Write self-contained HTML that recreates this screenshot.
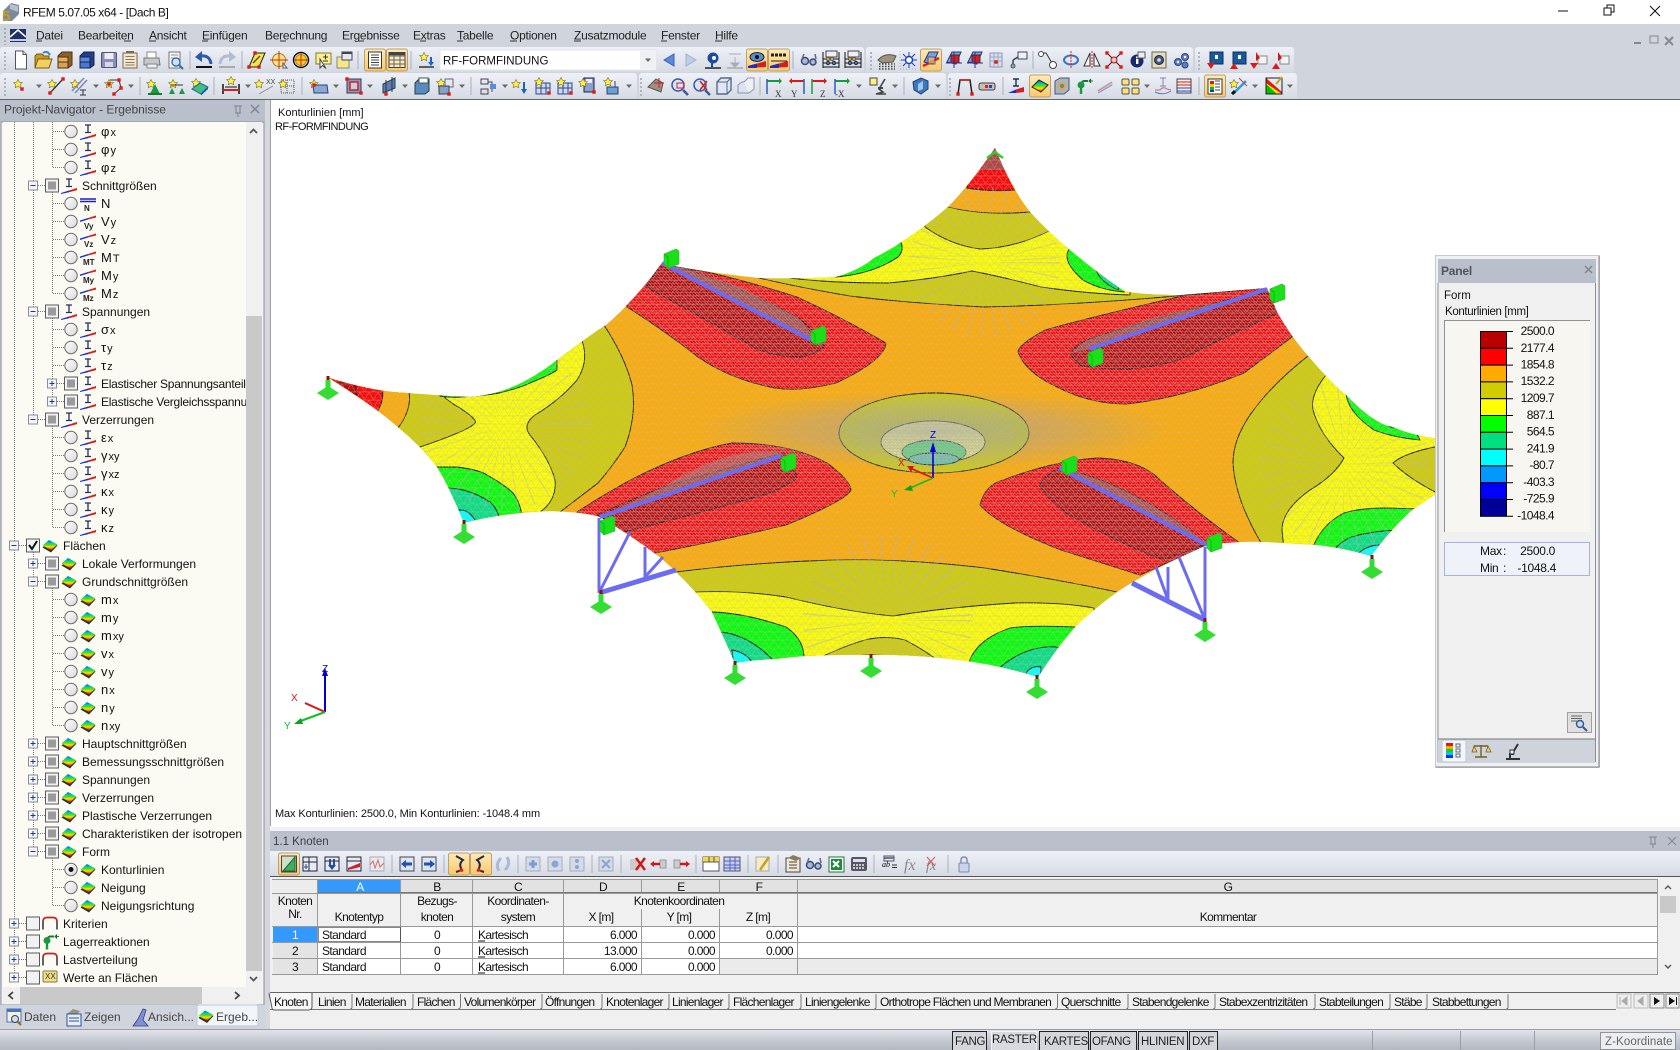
<!DOCTYPE html>
<html lang="de"><head><meta charset="utf-8"><title>RFEM 5.07.05 x64 - [Dach B]</title>
<style>
html,body{margin:0;padding:0;background:#fff;width:1680px;height:1050px;overflow:hidden}
svg{display:block;font-family:"Liberation Sans",sans-serif;fill:#000}
.m{font-size:12px;letter-spacing:-.25px;fill:#222}
.t{font-size:12px;fill:#111}
.tb{font-size:12px;letter-spacing:-.6px;fill:#111}
.tc{font-size:12px;letter-spacing:-.72px;fill:#111}
.c{text-anchor:middle}.r{text-anchor:end}
.s{font-size:11px}
.g{font-size:13px}
.gr{font-size:12px;fill:#444}
</style></head><body>
<svg width="1680" height="1050" viewBox="0 0 1680 1050" xmlns="http://www.w3.org/2000/svg">
<defs>
<linearGradient id="tbg" x1="0" y1="0" x2="0" y2="1"><stop offset="0" stop-color="#eef1f7"/><stop offset="1" stop-color="#d6dae3"/></linearGradient>
<linearGradient id="act" x1="0" y1="0" x2="0" y2="1"><stop offset="0" stop-color="#ffeab8"/><stop offset="1" stop-color="#fdc866"/></linearGradient>
<linearGradient id="stb" x1="0" y1="0" x2="0" y2="1"><stop offset="0" stop-color="#e2e4ea"/><stop offset=".5" stop-color="#c6cad2"/><stop offset="1" stop-color="#b4b8c0"/></linearGradient>
<linearGradient id="rad" x1="0" y1="0" x2="1" y2="1"><stop offset="0" stop-color="#fff"/><stop offset="1" stop-color="#d8d8d8"/></linearGradient>
<linearGradient id="rb" x1="0" y1="0" x2="0" y2="1"><stop offset="0" stop-color="#0060e0"/><stop offset=".3" stop-color="#00d0a0"/><stop offset=".5" stop-color="#60e000"/><stop offset=".7" stop-color="#ffe000"/><stop offset="1" stop-color="#f01000"/></linearGradient>
<radialGradient id="hz"><stop offset="0" stop-color="#9a9ab0" stop-opacity=".6"/><stop offset=".55" stop-color="#a0a0b0" stop-opacity=".35"/><stop offset="1" stop-color="#a0a0a0" stop-opacity="0"/></radialGradient>
<pattern id="m1" width="9" height="8" patternUnits="userSpaceOnUse"><path d="M0 0H9M0 8H9M0 0L4.5 8L9 0" stroke="#bcbcbc" stroke-width=".7" fill="none"/></pattern>
<pattern id="m2" width="3" height="3" patternUnits="userSpaceOnUse"><path d="M0 0L3 3M0 1.5H3" stroke="#b4b4b4" stroke-width=".6" fill="none"/></pattern>
<clipPath id="shell"><path id="sp" d="M995 148Q1012 190 1030 212Q1049 233 1070 250Q1100 275 1124 291Q1140 295 1180 295L1267 288L1277 312Q1292 338 1309 357Q1330 382 1346 395Q1375 425 1393 427Q1415 437 1450 440L1450 495L1434 495Q1420 505 1412 510Q1390 530 1371 556Q1335 545 1300 544Q1260 541 1240 542Q1220 543 1207 545Q1150 570 1117 592Q1090 612 1075 627Q1055 650 1038 677Q1000 665 959 660Q910 654 870 655Q810 654 775 659Q750 660 735 663Q725 640 712 612Q695 590 676 572Q655 550 600 517Q585 512 550 511Q500 513 464 523Q450 488 437 467Q420 445 399 428Q377 408 329 378Q375 392 407 393Q445 396 470 397Q500 395 527 380Q545 370 557 360Q590 335 606 325Q635 300 662 263L679 267Q720 274 759 278Q800 279 836 277Q860 270 874 258Q890 250 900 243Q925 227 948 207Q970 185 995 148Z"/></clipPath>
<clipPath id="tree"><rect x="3" y="122" width="243" height="865"/></clipPath>
<clipPath id="main"><rect x="271" y="100" width="1409" height="726"/></clipPath>

<!-- tree parts -->
<g id="rad0"><circle r="6.2" fill="url(#rad)" stroke="#6a6a6a"/></g>
<g id="ibeam"><path d="M-3-6.5H3M0-6.5V1M-3 1H3" stroke="#22305a" stroke-width="1.3" fill="none"/><path d="M-8 7.5L0 5V6.8L-8 8.5Z" fill="#1030e0"/><path d="M0 5L8 2.5V4.6L0 6.8Z" fill="#d02020"/></g>
<g id="isurf"><path d="M-7.5 1L-1-5L7.5-1L1 6Z" fill="#333" transform="translate(0 1)"/><path d="M-7.5 0L-1-5.5L7.5-1L1 4.5Z" fill="url(#rb)"/></g>
<g id="bx"><rect x="-6.5" y="-6.5" width="13" height="13" fill="#f2f2f2" stroke="#5a5a62"/></g>
<g id="bxm"><use href="#bx"/><rect x="-4" y="-4" width="8" height="8" fill="#9a9a9a"/></g>
<g id="ex"><rect x="-4.5" y="-4.5" width="9" height="9" fill="#f4f5fa" stroke="#8a8e9c"/><path d="M-2.5 0H2.5" stroke="#1a3a8a"/></g>
<g id="ep"><use href="#ex"/><path d="M0-2.5V2.5" stroke="#1a3a8a"/></g>
<g id="L3b"><use href="#rad0" x="71"/><use href="#ibeam" x="88"/></g>
<g id="L3s"><use href="#rad0" x="71"/><use href="#isurf" x="88"/></g>
<g id="L2mb"><use href="#ex" x="33"/><use href="#bxm" x="52"/><use href="#ibeam" x="69"/></g>
<g id="L2ms"><use href="#ex" x="33"/><use href="#bxm" x="52"/><use href="#isurf" x="69"/></g>
<g id="L2ps"><use href="#ep" x="33"/><use href="#bxm" x="52"/><use href="#isurf" x="69"/></g>
<g id="L25"><use href="#ep" x="52"/><use href="#bxm" x="71"/><use href="#ibeam" x="88"/></g>
<g id="wedge"><use href="#rad0" x="71"/><path d="M80-1L88-3.5V-2L80 0.5Z" fill="#1030e0"/><path d="M88-3.5L96-6V-4L88-2Z" fill="#d02020"/></g>
<g id="arch"><path d="M-7 6V-2Q-7-6-3-6H3Q7-6 7-2V6" fill="none" stroke="#333" stroke-width="1.5"/><path d="M-7-2Q-7-6-3-6H3Q7-6 7-2" fill="none" stroke="#d02020" stroke-width="1.5"/></g>

<!-- toolbar -->
<path id="dd" d="M-3-1.5H3L0 2Z" fill="#6a6a6a"/>
<path id="star" d="M-4-8.5L-2.6-5.8L.4-5.4L-1.8-3.3L-1.2-.3L-4-1.7L-6.8-.3L-6.2-3.3L-8.4-5.4L-5.4-5.8Z" fill="#fff040" stroke="#7a7040" stroke-width=".6"/>
<rect id="rd" x="-1.7" y="-1.7" width="3.4" height="3.4" fill="#e01818"/>
<g id="doc"><path d="M-5.5-9H2L5.5-5.5V9H-5.5Z" fill="#fff" stroke="#555"/><path d="M2-9V-5.5H5.5" fill="#ddd" stroke="#555"/></g>
<g id="fold"><path d="M-8 8V-4L-6-6H-1L1-4H6V8Z" fill="#c89a28" stroke="#7a5c10"/><path d="M-8 8L-5-1H9L6 8Z" fill="#f2d060" stroke="#7a5c10"/><path d="M0-7Q4-10 7-5" stroke="#3a8ac0" stroke-width="2" fill="none"/></g>
<g id="cab"><path d="M-7-4L-3-8H7V5L3 8H-7Z" fill="#8a6028" stroke="#4a3414"/><rect x="-7" y="-3" width="10" height="5" fill="#e8b060" stroke="#4a3414"/><rect x="-7" y="2" width="10" height="6" fill="#dca050" stroke="#4a3414"/></g>
<g id="cabb"><path d="M-7-4L-3-8H7V5L3 8H-7Z" fill="#24408a" stroke="#14244a"/><rect x="-7" y="-3" width="10" height="5" fill="#5a88e0" stroke="#14244a"/><rect x="-7" y="2" width="10" height="6" fill="#4a78d0" stroke="#14244a"/></g>
<g id="flop"><rect x="-7.5" y="-7.5" width="15" height="15" rx="1" fill="#8a8eb8" stroke="#50547a"/><rect x="-4.5" y="-7" width="9" height="6" fill="#eee"/><rect x="-4" y="2" width="8" height="5" fill="#d8d8e4"/></g>
<g id="note"><rect x="-7" y="-7" width="14" height="15" fill="#f2e6d0" stroke="#7a6a50"/><path d="M-4.500-3.500H4.500M-4.500-.5H4.500M-4.500 2.500H4.500M-4.500 5H4.500" stroke="#8a7a60"/><path d="M-4-8H4" stroke="#7a6a50" stroke-width="2"/></g>
<g id="prt"><path d="M-5-8H4V-1H-5Z" fill="#fff" stroke="#888"/><path d="M-8-2H7L8 5H-8Z" fill="#c8c8cc" stroke="#777"/><path d="M-5 4H5V8H-5Z" fill="#eee" stroke="#888"/></g>
<g id="prv"><path d="M-6-8H5V8H-6Z" fill="#f4f4f4" stroke="#777"/><path d="M-4-5H3M-4-2H1" stroke="#999"/><circle cx="1" cy="2" r="4" fill="#cfe4f8" stroke="#3a6ab0" stroke-width="1.4"/><path d="M4 5L8 9" stroke="#3a6ab0" stroke-width="2"/></g>
<g id="und"><path d="M7 4Q6-5-3-4" stroke="#2a5ab0" stroke-width="3" fill="none"/><path d="M-2-9L-9-3L-2 2Z" fill="#2a5ab0"/><path d="M-8 7H8" stroke="#111" stroke-width="2"/></g>
<g id="red"><path d="M-7 4Q-6-5 3-4" stroke="#b0bcd0" stroke-width="3" fill="none"/><path d="M2-9L9-3L2 2Z" fill="#b0bcd0"/><path d="M-8 7H8" stroke="#aaa" stroke-width="2"/></g>
<g id="para"><path d="M-8 7L-2-7H8L2 7Z" fill="#f4e050" stroke="#222"/><use href="#rd" x="-8" y="7"/><use href="#rd" x="-2" y="-7"/><use href="#rd" x="2" y="7"/><path d="M-4 3L3-4" stroke="#222"/></g>
<g id="tg1"><circle r="6.5" fill="#f8e880" stroke="#a08030"/><path d="M-9 0H9M0-9V9" stroke="#e02020"/><path d="M4 3L8 8L4 8Z" fill="#fff" stroke="#555"/></g>
<g id="tg2"><circle r="7.5" fill="none" stroke="#111" stroke-width="1.4"/><circle r="5.5" fill="#f0d020" stroke="#b09010"/><path d="M-7 0H7M0-7V7" stroke="#e02020"/></g>
<g id="npm"><rect x="-7" y="-7" width="15" height="11" fill="#fbf090" stroke="#8a7a30"/><path d="M0-3H5M2.500-5.500V-.5M0 1H5" stroke="#333"/><path d="M-3-1L-3 8L-.5 5.500L3 8.500Z" fill="#fff" stroke="#444"/></g>
<g id="win"><rect x="-8" y="-3" width="12" height="11" fill="#f6e888" stroke="#887" /><rect x="-3" y="-8" width="10" height="8" fill="#e8e8f0" stroke="#445"/><path d="M-3-7H7" stroke="#445" stroke-width="2"/></g>
<g id="lst"><rect x="-6.500" y="-8" width="13" height="16" fill="#fff" stroke="#333"/><path d="M-4-5H4M-4-2.500H4M-4 0H4M-4 2.500H4M-4 5H4" stroke="#444"/></g>
<g id="tbl"><rect x="-8" y="-7.500" width="16" height="15" fill="#fbeaba" stroke="#444"/><path d="M-8-4H8M-8 0H8M-8 4H8M-3-7.500V7.500M3-7.500V7.500" stroke="#666"/><path d="M-8-6H8" stroke="#444" stroke-width="2.500"/></g>
<g id="sdn"><use href="#star" x="2" y="1"/><path d="M5-3V3" stroke="#2060c0" stroke-width="2"/><path d="M2 2H8L5 6Z" fill="#2060c0"/><path d="M-7 7H8" stroke="#333" stroke-width="1.500"/></g>
<g id="la"><path d="M5-6V6L-5 0Z" fill="#5a8ae0" stroke="#3a60b0"/></g>
<g id="ra"><path d="M-5-6V6L5 0Z" fill="#c0cde8" stroke="#a0b0d0"/></g>
<g id="pey"><circle cy="-2" r="5.500" fill="#1e4aa0"/><circle cy="-2" cx="1" r="2" fill="#fff"/><path d="M-1 3V7" stroke="#1e4aa0" stroke-width="2"/><path d="M-8 8H8" stroke="#222" stroke-width="1.500"/></g>
<g id="xxd"><path d="M-6-6H6M0-3V6M-4 3H4L0 7Z" stroke="#aab" fill="#aab"/><path d="M-8 8H8" stroke="#aaa" stroke-width="1.500"/></g>
<g id="eye"><ellipse cy="-3" rx="7" ry="4.500" fill="#5a8ad0" stroke="#222"/><circle cy="-3" r="2" fill="#111"/><path d="M-9 6L9 1V7L-9 8Z" fill="#d02020"/><path d="M-9 6L0 3.500V8H-9Z" fill="#1a30c0"/></g>
<g id="xxa"><path d="M-8-5H8" stroke="#222" stroke-dasharray="3 1" stroke-width="3"/><path d="M-8 1H8" stroke="#222"/><path d="M-9 6L9 1V7L-9 8Z" fill="#d02020"/><path d="M-9 6L0 3.500V8H-9Z" fill="#1a30c0"/></g>
<g id="gls"><circle cx="-4" cy="1" r="3.500" fill="#a8b8d8" stroke="#3a4a70" stroke-width="1.500"/><circle cx="4" cy="2" r="3" fill="#a8b8d8" stroke="#3a4a70" stroke-width="1.500"/><path d="M-7-1L-5-6M7-1L6-6" stroke="#5a6a90" stroke-width="1.500"/></g>
<g id="aba"><path d="M-8-1H8M-8 3H8M-8 7H8M-8-8V8M8-8V8" stroke="#111"/><circle cx="-3" cy="-1" r="1.700" fill="#d8b040" stroke="#654"/><circle cx="1" cy="-1" r="1.700" fill="#d8b040" stroke="#654"/><circle cx="-3" cy="3" r="1.700" fill="#4a70c0" stroke="#234"/><circle cx="3" cy="3" r="1.700" fill="#4a70c0" stroke="#234"/><rect x="-5" y="-9" width="11" height="6" fill="#f0f0f0" stroke="#445"/></g>
<g id="hnd"><path d="M-9 0Q-2-8 9-4L6 2L-5 3Z" fill="#a09080" stroke="#554"/><path d="M-8 4H8M-8 6.500H8M-8 9H8" stroke="#444" stroke-dasharray="1.500 1.500" stroke-width="1.500"/></g>
<g id="sun"><circle r="3.500" fill="#fff" stroke="#1a40c0" stroke-width="1.500"/><path d="M-8 0H-4M4 0H8M0-8V-4M0 4V8M-6-6L-3-3M6 6L3 3M-6 6L-3 3M6-6L3-3" stroke="#1a40c0"/><path d="M-9-9V9M-9 9H9" stroke="#aaa" stroke-dasharray="1 2"/></g>
<g id="vw"><path d="M-7 2L-2-8H7L2 4Z" fill="#7ea0d8" stroke="#203a80"/><path d="M-8 6L8-2" stroke="#e02020" stroke-width="2.500"/><rect x="-3" y="-3" width="7" height="7" fill="#f8c060" stroke="#203a80" opacity=".7"/></g>
<g id="vr"><path d="M-7 2L-2-8H7L2 4Z" fill="#7ea0d8" stroke="#203a80"/><rect x="-3" y="-5" width="8" height="8" fill="#e01818" stroke="#333"/><path d="M-8 3H8M0-8V8" stroke="#20309a"/></g>
<g id="bld"><rect x="-6" y="-7" width="12" height="14" fill="#d8e0f0" stroke="#8a94b8"/><path d="M-6-3H6M-6 1H6M-2-7V7M2-7V7" stroke="#a0a8c8"/><use href="#rd" x="0" y="2"/></g>
<g id="pw"><rect x="-1" y="-8" width="9" height="7" fill="#eef" stroke="#445"/><path d="M-6 8V0M-6 0L-1-3" stroke="#445" stroke-width="1.500"/><circle cx="-6" cy="6" r="2" fill="#8ab" stroke="#456"/></g>
<g id="nod"><path d="M-8-7H-2L4 3" stroke="#333" fill="none"/><circle cx="-7" cy="-6" r="2.500" fill="#fff" stroke="#444"/><circle cx="5" cy="5" r="3.500" fill="#fff" stroke="#444"/></g>
<g id="rot"><ellipse rx="7" ry="4.500" fill="none" stroke="#3a70c0" stroke-width="2"/><path d="M0-9V9" stroke="#e02020" stroke-dasharray="2 1"/></g>
<g id="mir"><path d="M-2 6L-2-7L-8 6ZM2 6L2-7L8 6Z" fill="#f4f4f4" stroke="#333"/><path d="M0-9V9" stroke="#e02020" stroke-dasharray="2 1"/></g>
<g id="crs"><path d="M-7-7L7 7M7-7L-7 7" stroke="#222"/><use href="#rd" x="-7" y="-7"/><use href="#rd" x="7" y="-7"/><use href="#rd" x="-7" y="7"/><use href="#rd" x="7" y="7"/><circle r="3" fill="#e8c0c0" stroke="#c01010"/></g>
<g id="inf"><circle cy="1" r="6.500" fill="#1c2a6a"/><rect x="-1" y="-1" width="2.400" height="5" fill="#fff"/><rect x="-1" y="-3.500" width="2.400" height="1.800" fill="#fff"/><rect x="1" y="-8" width="7" height="6" fill="#eee" stroke="#556"/></g>
<g id="gea"><rect x="-7" y="-8" width="14" height="16" fill="#e8dcc0" stroke="#665"/><circle r="4.500" fill="#3a5a90" stroke="#223"/><circle r="1.800" fill="#e8dcc0"/></g>
<g id="gea2"><circle cx="-3" cy="2" r="3.500" fill="#5a80c8" stroke="#2a4080"/><circle cx="4" cy="-3" r="3.500" fill="#5a80c8" stroke="#2a4080"/><circle cx="4" cy="5" r="3" fill="#5a80c8" stroke="#2a4080"/><circle cx="-3" cy="2" r="1.200" fill="#fff"/><circle cx="4" cy="-3" r="1.200" fill="#fff"/></g>
<g id="bdn"><rect x="-6" y="-8" width="13" height="12" fill="#1a5a9a" stroke="#0a3060"/><rect x="-1" y="-5" width="3" height="4" fill="#fff"/><path d="M-9 3H-1L-5 9Z" fill="#e01818"/></g>
<g id="bup"><rect x="-6" y="-8" width="13" height="12" fill="#1a5a9a" stroke="#0a3060"/><rect x="-1" y="-5" width="3" height="4" fill="#fff"/><path d="M-9 9H-1L-5 3Z" fill="#e01818"/></g>
<g id="rdn"><rect x="-1" y="-4" width="9" height="8" fill="#f4f4f4" stroke="#888"/><path d="M-3-8L1-2L-3 1Z" fill="#d01818"/><path d="M-9 3H-1L-5 9Z" fill="#e01818"/></g>
<g id="rup"><rect x="-1" y="-4" width="9" height="8" fill="#f4f4f4" stroke="#888"/><path d="M-3-8L1-2L-3 1Z" fill="#d01818"/><path d="M-9 9H-1L-5 3Z" fill="#e01818"/></g>
<!-- t2 -->
<g id="a1"><use href="#star" x="2" y="2"/><use href="#rd" x="2" y="3"/></g>
<g id="a2"><use href="#star" x="0" y="2"/><path d="M-6 7L7-7" stroke="#333" stroke-width="1.300"/><use href="#rd" x="-6" y="7"/><use href="#rd" x="7" y="-7"/></g>
<g id="a3"><use href="#star" x="0" y="2"/><path d="M-7 5L5-8M-4 7L8-6" stroke="#7a8ac0" stroke-width="1.600"/><path d="M1 4H7M4 4V9M1 9H7" stroke="#334" /></g>
<g id="a4"><use href="#star" x="-1" y="2"/><path d="M-4-6H5L7 2L0 8" fill="none" stroke="#333"/><use href="#rd" x="5" y="-6"/><use href="#rd" x="7" y="2"/><use href="#rd" x="0" y="8"/><use href="#rd" x="-5" y="-2"/></g>
<g id="a5"><use href="#star" x="0" y="2"/><path d="M-5 8L0-2L5 8Z" fill="#1a9a40"/><path d="M-7 8H7" stroke="#1a7a30" stroke-width="2"/></g>
<g id="a6"><use href="#star" x="0" y="2"/><path d="M-8 8L-5 2L-2 8ZM2 8L5 2L8 8Z" fill="#1a9a40"/><path d="M-6-1H6" stroke="#333"/></g>
<g id="a7"><use href="#star" x="0" y="1"/><path d="M-8 3L0-3L8 1L1 8Z" fill="#3ac080" stroke="#2a60a0"/><path d="M1 8L8 1V3L1 9.500Z" fill="#2050a0"/></g>
<g id="a8"><path d="M-8-2V8M8-2V8" stroke="#111" stroke-width="1.500"/><path d="M-8 4H8" stroke="#d02020" stroke-width="2"/><path d="M-6 1H6" stroke="#111"/><use href="#star" x="4" y="-1"/></g>
<g id="a9"><use href="#star" x="-2" y="2"/><text x="1" y="-2" font-size="7" fill="#444">XX</text><path d="M-6 8L8 0" stroke="#889"/></g>
<g id="a10"><rect x="-6" y="-6" width="13" height="13" fill="none" stroke="#555" stroke-dasharray="1 1"/><path d="M-6 0H7M0-6V7" stroke="#555" stroke-dasharray="1 1"/><use href="#star" x="0" y="2"/></g>
<g id="a11"><use href="#star" x="-2" y="2"/><path d="M-7-1L7-1L8 7H-6Z" fill="#8aa8d0" stroke="#24408a"/><use href="#rd" x="-6" y="-1"/></g>
<g id="a12"><rect x="-7" y="-7" width="14" height="14" fill="#8a9ab8" stroke="#303a60"/><rect x="-4" y="-4" width="8" height="8" fill="#c8d0e0" stroke="#d02020" stroke-width="1.500"/><use href="#rd" x="-7" y="-7"/><use href="#rd" x="7" y="7"/></g>
<g id="a13"><path d="M-6 7V-2L6-8V2Z" fill="#5a80b8" stroke="#244"/><path d="M-3 8V-6M3 6V-9" stroke="#333" /><use href="#rd" x="-3" y="8"/></g>
<g id="a14"><path d="M-7-3L-3-7H7V5L3 8H-7Z" fill="#5a88c0" stroke="#244"/><rect x="-3" y="-8" width="9" height="5" fill="#fff" stroke="#455"/></g>
<g id="a15"><use href="#star" x="-1" y="1"/><rect x="-1" y="-7" width="8" height="8" fill="#e8e8f0" stroke="#667"/><path d="M-7 0H3V8H-7Z" fill="#8aa0c8" stroke="#345"/><use href="#rd" x="3" y="8"/></g>
<g id="a16"><rect x="-8" y="-7" width="7" height="5" fill="none" stroke="#445"/><rect x="-8" y="3" width="7" height="5" fill="none" stroke="#445"/><path d="M-1-4H3V6" stroke="#445" fill="none"/><rect x="1" y="-2" width="6" height="5" fill="#5a8ae0"/></g>
<g id="a17"><use href="#star" x="-1" y="2"/><path d="M3-4V4" stroke="#2060c0" stroke-width="2"/><path d="M0 3H6L3 8Z" fill="#2060c0"/></g>
<g id="a18"><rect x="-7" y="-3" width="14" height="11" fill="#d0d8ee" stroke="#2a4a90"/><path d="M-7 2H7M-2-3V8M3-3V8" stroke="#2a4a90"/><use href="#star" x="0" y="0"/><use href="#rd" x="6" y="7"/></g>
<g id="a19"><rect x="-5" y="-8" width="10" height="14" fill="#8aa0d0" stroke="#223"/><rect x="-3" y="-7" width="6" height="4" fill="#eee"/><use href="#star" x="-2" y="1"/><use href="#rd" x="5" y="6"/></g>
<g id="a20"><use href="#star" x="0" y="0"/><path d="M-5 1H6V8H-5Z" fill="#6aa0d8" stroke="#345"/><path d="M3-5V1" stroke="#345"/></g>
<g id="a21"><path d="M-8 1L0-7L7-3L5 6Z" fill="#a09080" stroke="#555"/><path d="M3-8V2M-2-3H8" stroke="#c02020"/></g>
<g id="a22"><circle cx="-2" cy="-1" r="6" fill="#d8e4f8" stroke="#3a5aa0" stroke-width="1.500"/><path d="M3 4L8 9" stroke="#3a5aa0" stroke-width="2.500"/><rect x="-3" y="-3" width="7" height="5" fill="none" stroke="#d02020"/></g>
<g id="a23"><circle cx="-2" cy="-1" r="6" fill="#d8e4f8" stroke="#3a5aa0" stroke-width="1.500"/><path d="M3 4L8 9" stroke="#3a5aa0" stroke-width="2.500"/><path d="M-2-5L5 4M5-5L-2 4" stroke="#d02020" stroke-width="1.500"/></g>
<g id="a24"><path d="M-7-4L-3-8H7V4L3 8H-7Z" fill="#e0e6f2" stroke="#556a90" stroke-width="1.400"/><path d="M-7-4H3V8M3-4L7-8" stroke="#556a90" fill="none"/></g>
<g id="a25"><path d="M-8-1L-4-4H3V7H-8Z" fill="#dce2ee" stroke="#8a94b0"/><path d="M-2-4L2-8H8V3L3 7" fill="#eef0f6" stroke="#8a94b0"/></g>
<g id="ax"><path d="M-7-5H7" stroke="#1a9a40" stroke-width="2"/><path d="M-7-7V8" stroke="#2a60c0" stroke-width="1.500"/><path d="M5-8L8-5L5-2Z" fill="#1a9a40"/></g>
<g id="ay"><path d="M-7-5H7" stroke="#e01818" stroke-width="2"/><path d="M7-7V8" stroke="#2a60c0" stroke-width="1.500"/><path d="M-5-8L-8-5L-5-2Z" fill="#e01818"/></g>
<g id="az"><path d="M-7-5H7" stroke="#e01818" stroke-width="2"/><path d="M-7-7V8" stroke="#1a9a40" stroke-width="1.500"/><path d="M5-8L8-5L5-2Z" fill="#e01818"/></g>
<g id="a26"><rect x="-8" y="-8" width="7" height="7" fill="#fff080" stroke="#444"/><path d="M7-7L1 3L5 6L-2 8H8" stroke="#444" stroke-width="1.600" fill="none"/><rect x="0" y="1" width="5" height="2" fill="#444"/></g>
<g id="a27"><path d="M-8-4L0-8L7-5L7 3L0 8L-7 4Z" fill="#3a78c0" stroke="#20406a"/><path d="M-3-2L2-5V3L-3 5Z" fill="#a0c8f0"/></g>
<g id="a28"><path d="M-7 8L-5-6H5L7 8" fill="none" stroke="#222" stroke-width="1.500"/><path d="M-5-6H5" stroke="#d02020" stroke-width="1.500"/><use href="#rd" x="-7" y="8"/><use href="#rd" x="7" y="8"/></g>
<g id="a29"><rect x="-8" y="-3" width="16" height="7" rx="2" fill="#c8c0b0" stroke="#444"/><rect x="-2" y="-1" width="3" height="3" fill="#e02020"/><rect x="2" y="-1" width="3" height="3" fill="#2040d0"/></g>
<g id="a30"><path d="M-3-7H3M0-7V0M-3 0H3" stroke="#22305a" stroke-width="1.400" fill="none"/><path d="M-8 7L0 3.500V7Z" fill="#1030e0"/><path d="M0 7V3.500L8 1V6Z" fill="#d02020"/></g>
<g id="a31"><path d="M-8 1L-1-6L8-1L1 6Z" fill="url(#rb)" stroke="#222"/></g>
<g id="a32"><path d="M-7-5L-2-8H7V4L2 8H-7Z" fill="#a0b8c8" stroke="#556"/><circle cx="0" cy="0" r="4.500" fill="#e8a060"/><circle r="2" fill="#40a070"/></g>
<g id="a33"><path d="M-3 3Q-3-5 0-5H4" stroke="#1a7a30" stroke-width="2" fill="none"/><circle cy="-1" cx="-3" r="3.500" fill="#1a9a40"/><path d="M5-5L9-5M7-7L5-5L7-3" stroke="#1a7a30"/><path d="M-3 3V8" stroke="#1a9a40" stroke-width="2.500"/></g>
<g id="a34"><path d="M-8 4L7-5L8-1L-6 7Z" fill="#c4c8d8"/><path d="M-7 5L7-4" stroke="#e08080"/><path d="M-7 7L7-1" stroke="#8090c0"/></g>
<g id="a35"><rect x="-8" y="-7" width="7" height="6" rx="1" fill="#fde080" stroke="#554"/><rect x="2" y="-7" width="7" height="6" rx="1" fill="#fde080" stroke="#554"/><rect x="-8" y="2" width="7" height="6" rx="1" fill="#fde080" stroke="#554"/><rect x="2" y="2" width="7" height="6" rx="1" fill="#fde080" stroke="#554"/></g>
<g id="a36"><path d="M-3-8H3M0-8V0M-3 0H3" stroke="#7a8ac0" fill="none"/><path d="M-8 4H-3Q0 0 4 3L8 4" stroke="#c07070" fill="none"/><path d="M-8 6Q0 10 8 5" stroke="#6070c0" fill="none"/></g>
<g id="a37"><rect x="-7" y="-7" width="14" height="14" fill="#f4f0e8" stroke="#444"/><path d="M-7-4H7M-7-1H7" stroke="#d02020"/><path d="M-7 2H7M-7 5H7" stroke="#2040d0"/></g>
<g id="a38"><rect x="-7" y="-7" width="14" height="15" fill="#fff" stroke="#333"/><rect x="-5" y="-5" width="4" height="3" fill="#e01818"/><rect x="-5" y="-2" width="4" height="3" fill="#f0d000"/><rect x="-5" y="1" width="4" height="3" fill="#10b030"/><rect x="-5" y="4" width="4" height="2" fill="#1030e0"/><path d="M0-5H5M0-2H5M0 1H5M0 4H5" stroke="#444"/></g>
<g id="a39"><use href="#star" x="-1" y="2"/><path d="M-6 8L7-5" stroke="#30a0d0" stroke-width="2.500"/><path d="M0-8L8 0" stroke="#c04040"/><path d="M-7 8L-4 5" stroke="#111" stroke-width="3"/></g>
<g id="a40"><path d="M-8-8V8H8Z" fill="#00c000"/><path d="M-8-8V-2L3 8H8Z" fill="#f0e000"/><path d="M-8-8L8 6V8L-8 -3Z" fill="#e01818"/><rect x="-8" y="-8" width="16" height="16" fill="none" stroke="#222"/><path d="M2-2L8-9" stroke="#c8a020" stroke-width="2"/></g>
<!-- table toolbar -->
<g id="b1"><rect x="-7.500" y="-8" width="15" height="16" fill="#cfe0c8" stroke="#445"/><path d="M-6 7L6-7V7Z" fill="#40b060" stroke="#206030"/></g>
<g id="b2"><rect x="-7" y="-7" width="14" height="14" fill="#e6eaf4" stroke="#223"/><path d="M-7-2H7M-1-7V7" stroke="#223"/><path d="M-4 0V5M-6 3H-2" stroke="#204aa0"/></g>
<g id="b3"><rect x="-7" y="-7" width="14" height="14" fill="#e6eaf4" stroke="#223"/><path d="M-7-3H7" stroke="#223"/><path d="M-2-5V2M2-5V2" stroke="#204aa0" stroke-width="2"/><path d="M-4 1H4L0 6Z" fill="#204aa0"/></g>
<g id="b4"><rect x="-7" y="-7" width="14" height="14" fill="#e6eaf4" stroke="#223"/><path d="M-7-3H7" stroke="#223"/><path d="M-6 4L6-1V3L-6 6Z" fill="#d02020"/></g>
<g id="b5"><rect x="-7" y="-7" width="14" height="14" fill="#e8e8ee" stroke="#aab"/><path d="M-7 1L-4-3L-2 4L1-4L3 3L7-1" stroke="#d07070" fill="none"/></g>
<g id="b6"><rect x="-7" y="-7" width="14" height="14" fill="#dde4f2" stroke="#445"/><path d="M5 0H-4" stroke="#2050b0" stroke-width="3"/><path d="M-1-4L-6 0L-1 4Z" fill="#2050b0"/></g>
<g id="b7"><rect x="-7" y="-7" width="14" height="14" fill="#dde4f2" stroke="#445"/><path d="M-5 0H4" stroke="#2050b0" stroke-width="3"/><path d="M1-4L6 0L1 4Z" fill="#2050b0"/></g>
<g id="b8"><path d="M-3-8L4-4Q-1 0 3 6L-3 8" fill="none" stroke="#1e2a50" stroke-width="2"/><path d="M3 3L4 8L-1 7Z" fill="#e02020"/></g>
<g id="b9"><path d="M3-8L-4-4Q1 0-3 6L3 8" fill="none" stroke="#1e2a50" stroke-width="2"/><path d="M-3 3L-4 8L1 7Z" fill="#e02020"/></g>
<g id="b10"><path d="M-4 7Q-8 0-2-6M4-7Q8 0 2 6" stroke="#aabbd8" stroke-width="3" fill="none"/></g>
<g id="b11"><rect x="-7" y="-7" width="14" height="14" fill="#d4dae6" stroke="#aab"/><path d="M-4 0H4M0-4V4" stroke="#7a9ad8" stroke-width="3"/></g>
<g id="b12"><rect x="-7" y="-7" width="14" height="14" fill="#d4dae6" stroke="#aab"/><circle r="3.500" fill="#8aa4d8"/></g>
<g id="b13"><rect x="-7" y="-7" width="14" height="14" fill="#d4dae6" stroke="#aab"/><circle cy="-3" r="2" fill="#8aa4d8"/><circle cy="3" r="2" fill="#8aa4d8"/></g>
<g id="b14"><rect x="-7" y="-7" width="14" height="14" fill="#d4dae6" stroke="#aab"/><path d="M-4-4L4 4M4-4L-4 4" stroke="#8aa4d8" stroke-width="2"/></g>
<g id="b15"><rect x="-8" y="-5" width="9" height="11" fill="#ccc"/><path d="M-2-6L7 6M7-6L-2 6" stroke="#d01818" stroke-width="2.500"/></g>
<g id="b16"><rect x="2" y="-4" width="6" height="8" fill="#ccc" stroke="#999"/><path d="M2 0H-6" stroke="#d01818" stroke-width="2.500"/><path d="M-4-3L-8 0L-4 3Z" fill="#d01818"/></g>
<g id="b17"><rect x="-8" y="-4" width="6" height="8" fill="#ccc" stroke="#999"/><path d="M-2 0H6" stroke="#d01818" stroke-width="2.500"/><path d="M4-3L8 0L4 3Z" fill="#d01818"/></g>
<g id="b18"><rect x="-8" y="-7" width="16" height="14" fill="#fff" stroke="#556"/><rect x="-8" y="-7" width="16" height="5" fill="#f6d840"/><path d="M-8-2H8M-2-7V-2M3-7V-2" stroke="#556"/></g>
<g id="b19"><rect x="-8" y="-7" width="16" height="14" fill="#c8d0f0" stroke="#556"/><path d="M-8-3H8M-8 1H8M-8 4H8" stroke="#5060c0"/><path d="M-2-7V7M3-7V7" stroke="#5060c0"/></g>
<g id="b20"><rect x="-7" y="-7" width="13" height="14" fill="#f4ecc8" stroke="#aaa"/><path d="M-3 6L6-7" stroke="#c8a020" stroke-width="2.500"/></g>
<g id="b21"><rect x="-7" y="-6" width="14" height="14" fill="#f2e8d0" stroke="#445"/><path d="M-4-2H4M-4 1H4M-4 4H4" stroke="#445"/><path d="M-5-6L0-9L8-6L3-3Z" fill="#8a7a60"/></g>
<g id="b22"><rect x="-7" y="-7" width="15" height="15" fill="#fff" stroke="#1a7a30"/><rect x="-5" y="-5" width="11" height="11" fill="#1e8a3c"/><path d="M-3-3L3 3M3-3L-3 3" stroke="#fff" stroke-width="2"/></g>
<g id="b23"><rect x="-8" y="-7" width="16" height="14" rx="2" fill="#556" /><rect x="-6" y="-5" width="12" height="3" fill="#dde"/><path d="M-6 1H6M-6 4H6" stroke="#eee" stroke-dasharray="2 1" stroke-width="1.500"/></g>
<g id="b24"><rect x="-5" y="-8" width="10" height="5" fill="#dfe4f0" stroke="#556"/><path d="M-5-6H5" stroke="#556" stroke-width="1.500"/><text x="-7" y="3" font-size="8" font-style="italic" font-family="Liberation Serif,serif">ab</text><path d="M3 1H8M3 3.500H8" stroke="#333"/></g>
<g id="b25"><text x="-7" y="6" font-size="16" font-style="italic" font-family="Liberation Serif,serif" fill="#888">fx</text></g>
<g id="b26"><text x="-7" y="6" font-size="14" font-style="italic" font-family="Liberation Serif,serif" fill="#888">fx</text><path d="M-6-7L2 2M2-7L-6 2" stroke="#e05050"/></g>
<g id="b27"><rect x="-5" y="-1" width="10" height="9" rx="1" fill="#c8d4ec" stroke="#7a8ab0"/><path d="M-3-1V-4Q-3-7 0-7Q3-7 3-4V-1" stroke="#7a8ab0" fill="none" stroke-width="1.400"/></g>
<path id="sep" d="M0-9V9" stroke="#aab0bc"/>
<g id="on"><rect x="-10.500" y="-11" width="21" height="22" rx="2" fill="url(#act)" stroke="#b8a070"/></g>
<!-- supports -->
<g id="sup"><path d="M-11 0L0-7L11 0L0 7Z" fill="#33dd33"/><path d="M-2.500-5V-13H2.500V-5Z" fill="#33dd33"/><rect x="-1.500" y="-17" width="3" height="4" fill="#8a1010"/></g>
<g id="post"><path d="M-7-4L5-9L8-7V6L-3 10L-7 6Z" fill="#19e019" stroke="#3ab03a" stroke-width=".6"/><path d="M-7-4L-3-1V10" fill="none" stroke="#0fb80f"/></g>
</defs>

<!-- window base -->
<rect width="1680" height="1050" fill="#d0d4dc"/>
<rect width="1680" height="24" fill="#fff"/>
<!-- app icon -->
<g><path d="M3 11L11 3L19 5V14L12 21H3Z" fill="#7a8a9a"/><path d="M10 4L18 6V12L10 9Z" fill="#b4c0cc"/><text x="2" y="21" font-size="15" font-weight="bold" fill="#c8a020">5</text></g>
<text x="23" y="16.500" font-size="12" letter-spacing="-.42" fill="#111">RFEM 5.07.05 x64 - [Dach B]</text>
<path d="M1558 11H1568" stroke="#111"/>
<path d="M1604 8V15H1611V8ZM1607 8V5H1614V12H1611" fill="none" stroke="#111"/>
<path d="M1650 6L1660 16M1660 6L1650 16" stroke="#111"/>

<!-- menu -->
<path d="M5 28V45" stroke="#a8adb8" stroke-dasharray="2 2" stroke-width="2"/>
<rect x="10" y="29" width="16" height="13" fill="#1e2f6a"/><path d="M10 37L18 30L26 37M10 40H26" stroke="#fff" fill="none" stroke-width="1.500"/>
<g class="m">
<text x="36" y="39.500">Datei</text><text x="78" y="39.500">Bearbeiten</text><text x="149" y="39.500">Ansicht</text><text x="202" y="39.500">Einfügen</text><text x="265" y="39.500">Berechnung</text><text x="342" y="39.500">Ergebnisse</text><text x="413" y="39.500">Extras</text><text x="457" y="39.500">Tabelle</text><text x="510" y="39.500">Optionen</text><text x="574" y="39.500">Zusatzmodule</text><text x="661" y="39.500">Fenster</text><text x="715" y="39.500">Hilfe</text>
</g>
<path d="M36 41H42M124 41H131M149 41H156M202 41H208M280 41H286M358 41H364M420 41H426M457 41H463M510 41H517M574 41H581M661 41H667M715 41H722" stroke="#333"/>
<path d="M1634 43H1641" stroke="#888" stroke-width="2"/><rect x="1650" y="36" width="8" height="7" fill="none" stroke="#888"/><path d="M1665 37L1673 45M1673 37L1665 45" stroke="#888" stroke-width="2"/>

<!-- toolbar bars -->
<rect x="0" y="47" width="864" height="25" rx="3" fill="url(#tbg)"/><rect x="866" y="47" width="327" height="25" rx="3" fill="url(#tbg)"/><rect x="1195" y="47" width="99" height="25" rx="3" fill="url(#tbg)"/>
<rect x="0" y="73" width="637" height="26" rx="3" fill="url(#tbg)"/><rect x="639" y="73" width="307" height="26" rx="3" fill="url(#tbg)"/><rect x="948" y="73" width="349" height="26" rx="3" fill="url(#tbg)"/>
<rect y="99" width="1680" height="1" fill="#666"/>
<path d="M5 52V70M5 78V96M871 52V70M1199 52V70M641 78V96M950 78V96" stroke="#b0b4c0" stroke-dasharray="2 2" stroke-width="2"/>

<use href="#doc" x="21" y="60"/><use href="#fold" x="43" y="60"/><use href="#cab" x="65" y="60"/><use href="#cabb" x="87" y="60"/><use href="#flop" x="109" y="60"/><use href="#note" x="130" y="60"/><use href="#prt" x="152" y="60"/><use href="#prv" x="175" y="60"/>
<use href="#sep" x="190" y="60"/><use href="#und" x="204" y="60"/><use href="#red" x="227" y="60"/><use href="#sep" x="242" y="60"/><use href="#para" x="257" y="60"/><use href="#tg1" x="279" y="60"/><use href="#tg2" x="301" y="60"/><use href="#npm" x="323" y="60"/><use href="#win" x="345" y="60"/><use href="#sep" x="358" y="60"/>
<use href="#on" x="375" y="60"/><use href="#lst" x="375" y="60"/><use href="#on" x="397" y="60"/><use href="#tbl" x="397" y="60"/><use href="#sep" x="411" y="60"/><use href="#sdn" x="426" y="60"/>
<rect x="440" y="50" width="216" height="20" fill="#fff" stroke="#e4e6ec"/><rect x="640" y="51" width="15" height="18" fill="#eef0f4"/><use href="#dd" x="648" y="60"/><text x="443" y="64.500" font-size="11.500" fill="#111">RF-FORMFINDUNG</text>
<use href="#la" x="669" y="60"/><use href="#ra" x="691" y="60"/><use href="#pey" x="713" y="60"/><use href="#xxd" x="735" y="60"/><use href="#on" x="757" y="60"/><use href="#eye" x="757" y="60"/><use href="#on" x="779" y="60"/><use href="#xxa" x="779" y="60"/><use href="#sep" x="793" y="60"/><use href="#gls" x="809" y="60"/><use href="#aba" x="831" y="60"/><use href="#aba" x="853" y="60"/>
<use href="#hnd" x="887" y="60"/><use href="#sun" x="909" y="60"/><use href="#on" x="931" y="60"/><use href="#vw" x="931" y="60"/><use href="#vr" x="954" y="60"/><use href="#vr" x="975" y="60"/><use href="#bld" x="996" y="60"/><use href="#pw" x="1019" y="60"/><use href="#sep" x="1033" y="60"/><use href="#nod" x="1048" y="60"/><use href="#rot" x="1071" y="60"/><use href="#mir" x="1092" y="60"/><use href="#crs" x="1114" y="60"/><use href="#inf" x="1137" y="60"/><use href="#gea" x="1159" y="60"/><use href="#gea2" x="1181" y="60"/>
<use href="#bdn" x="1216" y="60"/><use href="#bup" x="1239" y="60"/><use href="#rdn" x="1259" y="60"/><use href="#rup" x="1281" y="60"/>

<use href="#a1" x="20" y="86"/><use href="#dd" x="39" y="86"/><use href="#a2" x="56" y="86"/><use href="#a3" x="79" y="86"/><use href="#dd" x="96" y="86"/><use href="#a4" x="114" y="86"/><use href="#dd" x="131" y="86"/><use href="#sep" x="140" y="86"/><use href="#a5" x="155" y="86"/><use href="#a6" x="177" y="86"/><use href="#a7" x="200" y="86"/><use href="#sep" x="214" y="86"/><use href="#a8" x="231" y="86"/><use href="#dd" x="248" y="86"/><use href="#a9" x="265" y="86"/><use href="#a10" x="287" y="86"/><use href="#sep" x="302" y="86"/><use href="#a11" x="320" y="86"/><use href="#dd" x="336" y="86"/><use href="#a12" x="354" y="86"/><use href="#dd" x="370" y="86"/><use href="#a13" x="389" y="86"/><use href="#dd" x="405" y="86"/><use href="#a14" x="422" y="86"/><use href="#a15" x="446" y="86"/><use href="#dd" x="462" y="86"/><use href="#sep" x="471" y="86"/><use href="#a16" x="489" y="86"/><use href="#dd" x="505" y="86"/><use href="#a17" x="521" y="86"/><use href="#a18" x="543" y="86"/><use href="#a19" x="589" y="86"/><use href="#a18" x="565" y="86"/><use href="#a20" x="612" y="86"/><use href="#dd" x="629" y="86"/>
<use href="#a21" x="656" y="86"/><use href="#a22" x="680" y="86"/><use href="#a23" x="702" y="86"/><use href="#a24" x="724" y="86"/><use href="#a25" x="746" y="86"/><use href="#sep" x="760" y="86"/><use href="#ax" x="774" y="86"/><text x="775" y="97" font-size="9" font-family="Liberation Serif,serif" fill="#333">X</text><use href="#ay" x="797" y="86"/><text x="791" y="97" font-size="9" font-family="Liberation Serif,serif" fill="#333">Y</text><use href="#az" x="819" y="86"/><text x="820" y="97" font-size="9" font-family="Liberation Serif,serif" fill="#333">Z</text><use href="#ax" x="842" y="86"/><text x="835" y="97" font-size="9" font-family="Liberation Serif,serif" fill="#333">-X</text><use href="#dd" x="859" y="86"/><use href="#a26" x="878" y="86"/><use href="#dd" x="895" y="86"/><use href="#sep" x="904" y="86"/><use href="#a27" x="921" y="86"/><use href="#dd" x="938" y="86"/>
<use href="#a28" x="965" y="86"/><use href="#a29" x="987" y="86"/><use href="#sep" x="1003" y="86"/><use href="#a30" x="1016" y="86"/><use href="#on" x="1040" y="86"/><use href="#a31" x="1040" y="86"/><use href="#a32" x="1062" y="86"/><use href="#a33" x="1084" y="86"/><use href="#a34" x="1105" y="86"/><use href="#a35" x="1130" y="86"/><use href="#dd" x="1147" y="86"/><use href="#a36" x="1163" y="86"/><use href="#a37" x="1184" y="86"/><use href="#sep" x="1199" y="86"/><use href="#on" x="1215" y="86"/><use href="#a38" x="1215" y="86"/><use href="#a39" x="1239" y="86"/><use href="#dd" x="1255" y="86"/><use href="#a40" x="1274" y="86"/><use href="#dd" x="1290" y="86"/>

<!-- navigator panel -->
<rect x="0" y="100" width="270" height="930" fill="#d4d7de"/>
<rect x="0" y="100" width="265" height="22" fill="#b9c0cb"/>
<text x="4" y="113.500" font-size="12" fill="#444" letter-spacing="-.05">Projekt-Navigator - Ergebnisse</text>
<path d="M236 106V113M240 106V113M235 113H241M238 113V117M234 106H242" stroke="#808690" fill="none"/>
<path d="M251 105L259 113M259 105L251 113" stroke="#808690" stroke-width="1.500"/>
<rect x="1" y="122" width="263" height="883" fill="#f4f4f4" stroke="#8a8e98"/>
<rect x="3" y="122" width="243" height="865" fill="#fbfbf3"/>
<rect x="246" y="122" width="16" height="865" fill="#f0f0f0"/><rect x="246" y="316" width="16" height="655" fill="#c9c9c9"/>
<path d="M250 133L253.500 129.500L257 133" stroke="#555" stroke-width="1.800" fill="none"/>
<path d="M250 977L253.500 980.500L257 977" stroke="#555" stroke-width="1.800" fill="none"/>
<rect x="3" y="987" width="259" height="17" fill="#f0f0f0"/><rect x="20" y="987" width="182" height="17" fill="#c9c9c9"/>
<path d="M13 992L9 995.500L13 999M235 992L239 995.500L235 999" stroke="#444" stroke-width="1.800" fill="none"/>
<rect x="0" y="1005" width="265" height="24" fill="#d0d4dc"/>
<rect x="197" y="1005" width="61" height="21" rx="2" fill="#f2f5fa" stroke="#c0c8d4"/>
<g><rect x="7" y="1009" width="14" height="13" fill="#f4f0e0" stroke="#4a70c0"/><rect x="7" y="1009" width="14" height="3" fill="#4a70c0"/><circle cx="15" cy="1019" r="3.500" fill="#cde" stroke="#345"/><path d="M18 1022L21 1025" stroke="#a06020" stroke-width="2"/>
<path d="M67 1014L73 1009L80 1011L75 1017Z" fill="#a09080"/><rect x="67" y="1014" width="14" height="12" fill="#e8eef8" stroke="#2a50a0"/><path d="M69 1018H79M69 1021H79" stroke="#2a50a0"/>
<path d="M133 1026H148L143 1020L146 1010L143 1009L138 1019Z" fill="#8090d0" stroke="#303a90" stroke-width=".8"/><use href="#isurf" x="206" y="1016"/></g>
<g font-size="12" fill="#444"><text x="24" y="1021">Daten</text><text x="84" y="1021">Zeigen</text><text x="148" y="1021">Ansich...</text><text x="216" y="1021">Ergeb...</text></g>

<!-- tree -->
<g clip-path="url(#tree)">
<path d="M14.500 122V977M33.500 122V419M33.500 546V851M52.500 122V167M52.500 186V293M52.500 312V401M52.500 420V527M52.500 582V725M52.500 852V905" stroke="#777" stroke-dasharray="1 1" fill="none"/>
<path d="M53 131.500H65M53 149.500H65M53 167.500H65M38 185.500H46M53 203.500H65M53 221.500H65M53 239.500H65M53 257.500H65M53 275.500H65M53 293.500H65M38 311.500H46M53 329.500H65M53 347.500H65M53 365.500H65M57 383.500H65M57 401.500H65M38 419.500H46M53 437.500H65M53 455.500H65M53 473.500H65M53 491.500H65M53 509.500H65M53 527.500H65M19 545.500H27M38 563.500H46M38 581.500H46M53 599.500H65M53 617.500H65M53 635.500H65M53 653.500H65M53 671.500H65M53 689.500H65M53 707.500H65M53 725.500H65M38 743.500H46M38 761.500H46M38 779.500H46M38 797.500H46M38 815.500H46M38 833.500H46M38 851.500H46M53 869.500H65M53 887.500H65M53 905.500H65M19 923.500H27M19 941.500H27M19 959.500H27M19 977.500H27" stroke="#777" stroke-dasharray="1 1"/>

<use href="#L3b" y="131.500"/><use href="#L3b" y="149.500"/><use href="#L3b" y="167.500"/>
<use href="#L2mb" y="185.500"/>
<use href="#wedge" y="221.500"/><use href="#wedge" y="239.500"/><use href="#wedge" y="257.500"/><use href="#wedge" y="275.500"/><use href="#wedge" y="293.500"/>
<use href="#rad0" x="71" y="203.500"/><path d="M80 199H96M80 201.500H96" stroke="#2020c0" stroke-width="1.400"/>
<g font-size="8" font-weight="bold" fill="#222"><text x="84" y="211">N</text><text x="84" y="229">Vy</text><text x="84" y="247">Vz</text><text x="83" y="265">MT</text><text x="83" y="283">My</text><text x="83" y="301">Mz</text></g>
<use href="#L2mb" y="311.500"/><use href="#L3b" y="329.500"/><use href="#L3b" y="347.500"/><use href="#L3b" y="365.500"/><use href="#L25" y="383.500"/><use href="#L25" y="401.500"/><use href="#L2mb" y="419.500"/>
<use href="#L3b" y="437.500"/><use href="#L3b" y="455.500"/><use href="#L3b" y="473.500"/><use href="#L3b" y="491.500"/><use href="#L3b" y="509.500"/><use href="#L3b" y="527.500"/>
<use href="#ex" x="14" y="545.500"/><use href="#bx" x="33" y="545.500"/><path d="M29 545L32 549L37 541" stroke="#111" stroke-width="2" fill="none"/><use href="#isurf" x="50" y="545.500"/>
<use href="#L2ps" y="563.500"/><use href="#L2ms" y="581.500"/>
<use href="#L3s" y="599.500"/><use href="#L3s" y="617.500"/><use href="#L3s" y="635.500"/><use href="#L3s" y="653.500"/><use href="#L3s" y="671.500"/><use href="#L3s" y="689.500"/><use href="#L3s" y="707.500"/><use href="#L3s" y="725.500"/>
<use href="#L2ps" y="743.500"/><use href="#L2ps" y="761.500"/><use href="#L2ps" y="779.500"/><use href="#L2ps" y="797.500"/><use href="#L2ps" y="815.500"/><use href="#L2ps" y="833.500"/><use href="#L2ms" y="851.500"/>
<use href="#L3s" y="869.500"/><circle cx="71" cy="869.500" r="2.500" fill="#111"/><use href="#L3s" y="887.500"/><use href="#L3s" y="905.500"/>
<use href="#ep" x="14" y="923.500"/><use href="#bx" x="33" y="923.500"/><use href="#arch" x="50" y="923.500"/>
<use href="#ep" x="14" y="941.500"/><use href="#bx" x="33" y="941.500"/><use href="#a33" x="50" y="941.500"/>
<use href="#ep" x="14" y="959.500"/><use href="#bx" x="33" y="959.500"/><use href="#arch" x="50" y="959.500"/>
<use href="#ep" x="14" y="977.500"/><use href="#bx" x="33" y="977.500"/><rect x="43" y="971" width="14" height="11" rx="1" fill="#f0e080" stroke="#776"/><text x="45" y="979" font-size="8" fill="#333">XX</text>

<g class="t">
<text x="101" y="136" class="g">φ<tspan class="s" dx="1">x</tspan></text><text x="101" y="154" class="g">φ<tspan class="s" dx="1">y</tspan></text><text x="101" y="172" class="g">φ<tspan class="s" dx="1">z</tspan></text>
<text x="82" y="190">Schnittgrößen</text>
<text x="101" y="208" class="g">N</text><text x="101" y="226" class="g">V<tspan class="s" dx="1">y</tspan></text><text x="101" y="244" class="g">V<tspan class="s" dx="1">z</tspan></text><text x="101" y="262" class="g">M<tspan class="s" dx="1">T</tspan></text><text x="101" y="280" class="g">M<tspan class="s" dx="1">y</tspan></text><text x="101" y="298" class="g">M<tspan class="s" dx="1">z</tspan></text>
<text x="82" y="316">Spannungen</text>
<text x="101" y="334" class="g">σ<tspan class="s" dx="1">x</tspan></text><text x="101" y="352" class="g">τ<tspan class="s" dx="1">y</tspan></text><text x="101" y="370" class="g">τ<tspan class="s" dx="1">z</tspan></text>
<text x="101" y="388" letter-spacing="-.25">Elastischer Spannungsanteil</text><text x="101" y="406" letter-spacing="-.25">Elastische Vergleichsspannung</text>
<text x="82" y="424">Verzerrungen</text>
<text x="101" y="442" class="g">ε<tspan class="s" dx="1">x</tspan></text><text x="101" y="460" class="g">γ<tspan class="s" dx="1">xy</tspan></text><text x="101" y="478" class="g">γ<tspan class="s" dx="1">xz</tspan></text><text x="101" y="496" class="g">κ<tspan class="s" dx="1">x</tspan></text><text x="101" y="514" class="g">κ<tspan class="s" dx="1">y</tspan></text><text x="101" y="532" class="g">κ<tspan class="s" dx="1">z</tspan></text>
<text x="63" y="550">Flächen</text>
<text x="82" y="568">Lokale Verformungen</text><text x="82" y="586">Grundschnittgrößen</text>
<text x="101" y="604" class="g">m<tspan class="s" dx="1">x</tspan></text><text x="101" y="622" class="g">m<tspan class="s" dx="1">y</tspan></text><text x="101" y="640" class="g">m<tspan class="s" dx="1">xy</tspan></text><text x="101" y="658" class="g">v<tspan class="s" dx="1">x</tspan></text><text x="101" y="676" class="g">v<tspan class="s" dx="1">y</tspan></text><text x="101" y="694" class="g">n<tspan class="s" dx="1">x</tspan></text><text x="101" y="712" class="g">n<tspan class="s" dx="1">y</tspan></text><text x="101" y="730" class="g">n<tspan class="s" dx="1">xy</tspan></text>
<text x="82" y="748">Hauptschnittgrößen</text><text x="82" y="766">Bemessungsschnittgrößen</text><text x="82" y="784">Spannungen</text><text x="82" y="802">Verzerrungen</text><text x="82" y="820">Plastische Verzerrungen</text><text x="82" y="838">Charakteristiken der isotropen Flächen</text><text x="82" y="856">Form</text>
<text x="101" y="874">Konturlinien</text><text x="101" y="892">Neigung</text><text x="101" y="910">Neigungsrichtung</text>
<text x="63" y="928">Kriterien</text><text x="63" y="946">Lagerreaktionen</text><text x="63" y="964">Lastverteilung</text><text x="63" y="982">Werte an Flächen</text>
</g>
</g>

<!-- main view -->
<rect x="270" y="100" width="1410" height="727" fill="#fff"/>
<path d="M270.500 100V826" stroke="#9a9ea8"/>
<g clip-path="url(#main)">
<g clip-path="url(#shell)" stroke="#111" stroke-width=".9">
<rect x="300" y="130" width="1160" height="560" fill="#ffaa00" stroke="none"/>
<!-- left wing -->
<path d="M604 325Q625 357 632 385Q637 415 625 447Q612 467 598 483L560 512L540 540L300 540L300 300L560 300Z" fill="#d0cc00"/>
<path d="M581 338Q590 360 577 380Q560 400 535 415Q522 425 530 435Q550 460 555 480Q557 500 540 512L540 540L300 540L300 300L560 300Z" fill="#ffff00"/>
<path d="M432 385Q445 400 460 408Q478 420 475 423Q470 430 420 447L400 450L330 400L400 370Z" fill="#d0cc00"/>
<path d="M407 385Q415 405 398 428L380 430L320 380L400 370Z" fill="#ffaa00"/>
<path d="M382 385Q385 400 377 412L360 415L320 380L370 370Z" fill="#ff0000"/>
<path d="M355 380L357 395L320 385Z" fill="#c00000"/>
<path d="M440 390L440 396Q450 398 461 397Q490 395 499 393Q520 388 530 383Q550 375 557 370L557 350L500 380Z" fill="#00ff00"/>
<path d="M430 467L457 467Q480 470 487 475Q505 485 513 493Q522 505 522 520L450 530Z" fill="#00ff00"/>
<path d="M440 488L449 488Q470 489 490 502Q497 508 500 520L450 530Z" fill="#00e080"/>
<path d="M455 510L461 510Q470 510 478 525L460 530Z" fill="#00ffff"/>
<!-- right wing -->
<path d="M1308 356Q1271 385 1250 415Q1233 440 1233 463Q1235 500 1263 546L1500 560L1500 300Z" fill="#d0cc00"/>
<path d="M1326 375Q1310 395 1313 410Q1320 435 1344 458Q1335 475 1310 490Q1282 510 1282 530L1284 550L1500 560L1500 300Z" fill="#ffff00"/>
<path d="M1445 445Q1405 452 1393 463Q1410 480 1445 497Z" fill="#d0cc00"/>
<path d="M1346 390Q1345 410 1374 430Q1395 438 1420 440L1400 400Z" fill="#00ff00"/>
<path d="M1369 410Q1375 420 1393 428L1400 420Z" fill="#00e080"/>
<path d="M1420 509L1386 508Q1360 508 1344 513Q1320 525 1311 552L1390 570Z" fill="#00ff00"/>
<path d="M1405 530Q1375 530 1351 537Q1340 542 1332 552L1375 565Z" fill="#00e080"/>
<path d="M1380 545Q1365 545 1355 557L1375 565Z" fill="#00ffff"/>
<!-- top wing -->
<path d="M759 278Q797 287 850 296Q907 303 984 307Q1080 305 1187 295L1187 100L759 100Z" fill="#d0cc00"/>
<path d="M790 278Q828 283 888 283Q934 279 972 271Q1003 277 1041 287Q1090 294 1130 295L1130 100L790 100Z" fill="#ffff00"/>
<path d="M925 227Q950 245 980 249Q1015 248 1049 231L1049 100L925 100Z" fill="#d0cc00"/>
<path d="M948 207Q984 216 1030 212L1030 100L948 100Z" fill="#ffaa00"/>
<path d="M967 188Q990 192 1015 190L1015 100L967 100Z" fill="#ff0000"/>
<path d="M980 168L1008 168L1000 130L990 130Z" fill="#c00000"/>
<path d="M836 277Q873 274 898 257Q905 250 900 240L860 250Z" fill="#00ff00"/>
<path d="M1070 248Q1060 260 1083 280Q1100 290 1124 292L1125 270Z" fill="#00ff00"/>
<path d="M1095 268Q1100 282 1118 290L1120 280Z" fill="#00e080"/>
<!-- lower wing -->
<path d="M676 572Q745 563 832 560Q898 558 985 568Q1060 580 1117 592L1117 720L676 720Z" fill="#d0cc00"/>
<path d="M695 592Q740 590 786 597Q847 612 893 616Q949 607 1015 603Q1060 602 1094 608L1094 720L695 720Z" fill="#ffff00"/>
<path d="M712 612Q745 613 786 627Q805 640 804 660L735 680L700 630Z" fill="#00ff00"/>
<path d="M722 632Q750 636 773 660L735 680L715 640Z" fill="#00e080"/>
<path d="M732 650Q745 652 752 662L735 675Z" fill="#00ffff"/>
<path d="M1075 627Q1030 625 1010 628Q975 640 968 665L1040 690L1090 630Z" fill="#00ff00"/>
<path d="M1056 647Q1025 645 997 670L1040 690L1070 650Z" fill="#00e080"/>
<path d="M1041 667Q1030 665 1025 675L1040 685Z" fill="#00ffff"/>
<path d="M819 658Q847 645 865 640Q885 635 905 640Q925 650 944 665Z" fill="#d0cc00"/>
<path d="M837 660Q870 650 908 660Z" fill="#ffaa00"/>
<!-- red lobes -->
<path d="M662 263L679 267Q721 273 797 297Q843 318 886 343Q885 360 836 383Q800 392 775 388Q732 380 698 357Q664 330 627 307L620 250Z" fill="#ff0000"/>
<path d="M646 287L662 262L683 268Q740 287 797 317Q826 340 824 347Q810 357 797 357Q775 356 759 350Q729 333 683 307Z" fill="#c00000"/>
<path d="M1187 295Q1099 315 1045 330Q1018 345 1018 352Q1025 372 1057 387Q1090 404 1126 404Q1183 398 1244 373L1292 337L1300 280L1267 288Z" fill="#ff0000"/>
<path d="M1278 293L1278 313Q1233 333 1179 360Q1150 368 1126 369Q1090 369 1080 365Q1070 355 1071 353Q1075 345 1087 340Q1152 318 1256 293Z" fill="#c00000"/>
<path d="M577 512Q600 497 625 483Q683 452 732 443Q790 443 827 463Q850 480 851 490Q847 500 786 525Q724 540 655 553L600 530Z" fill="#ff0000"/>
<path d="M602 517L620 533Q704 512 770 493Q798 480 796 478Q797 465 783 453Q730 467 663 487Q625 502 597 515Z" fill="#c00000"/>
<path d="M980 505Q985 485 1003 480Q1057 460 1099 458Q1141 460 1160 480Q1200 515 1240 543L1207 545L1140 575Q1061 550 1061 550Q997 525 980 505Z" fill="#ff0000"/>
<path d="M1059 468Q1040 478 1040 487Q1050 500 1066 513Q1112 540 1163 560L1204 545L1190 530Q1120 480 1059 468Z" fill="#c00000"/>
<!-- hub -->
<ellipse cx="934" cy="433" rx="95" ry="40" fill="#d0cc00"/>
<ellipse cx="933" cy="442" rx="52" ry="21" fill="#ffff60"/>
<ellipse cx="934" cy="452" rx="32" ry="12" fill="#30ee50"/>
<ellipse cx="934" cy="459" rx="25" ry="6" fill="#50c8a0"/>
<!-- mesh -->
<g stroke="none">
<rect x="300" y="130" width="1160" height="560" fill="url(#m2)" opacity=".2"/>
<rect x="300" y="130" width="1160" height="560" fill="url(#m1)" opacity=".45"/>
<ellipse cx="934" cy="430" rx="240" ry="40" fill="url(#hz)"/>
<ellipse cx="933" cy="442" rx="52" ry="21" fill="url(#m2)" opacity=".6"/>
<path d="M662 263L679 267Q721 273 797 297Q843 318 886 343Q885 360 836 383Q800 392 775 388Q732 380 698 357Q664 330 627 307Z M1187 295Q1099 315 1045 330Q1018 345 1018 352Q1025 372 1057 387Q1090 404 1126 404Q1183 398 1244 373L1292 337L1277 312L1267 288Z M577 512Q600 497 625 483Q683 452 732 443Q790 443 827 463Q850 480 851 490Q847 500 786 525Q724 540 655 553Z M980 505Q985 485 1003 480Q1057 460 1099 458Q1141 460 1160 480Q1200 515 1240 543L1207 545L1140 575Q1061 550 1061 550Q997 525 980 505Z" fill="url(#m2)" opacity=".5"/>
<path d="M662 263L811 340L824 347L797 317L740 287L683 268Z" fill="#a09090" opacity=".5"/>
<path d="M1267 289L1089 349L1071 353L1087 340L1152 318L1256 293Z" fill="#a09090" opacity=".5"/>
<path d="M600 517L781 456L783 453Q730 444 663 487Z" fill="#a09090" opacity=".5"/>
<path d="M1059 468L1207 545L1190 530Q1120 480 1059 468Z" fill="#a09090" opacity=".5"/>
<path d="M980 133L1010 133L1008 170L982 170Z" fill="#a0a0a0" opacity=".4"/>
</g>
<g fill="none" stroke="#b4b4b4">
<ellipse cx="934" cy="436" rx="68" ry="26" stroke-width="24" stroke-dasharray="1 3" opacity=".35"/>
<circle cx="888" cy="620" r="50" stroke-width="70" stroke-dasharray="1 9" opacity=".45"/>
<circle cx="985" cy="262" r="45" stroke-width="60" stroke-dasharray="1 8" opacity=".4"/>
<circle cx="505" cy="425" r="50" stroke-width="70" stroke-dasharray="1 9" opacity=".35"/>
<circle cx="1345" cy="465" r="50" stroke-width="70" stroke-dasharray="1 9" opacity=".35"/>
</g>
</g>

<!-- truss & beams -->
<g stroke="#6c6cf0" fill="none">
<path d="M599 518V593M599 593L630 532M645 547V577M645 577L663 557" stroke-width="3"/>
<path d="M599 593L676 570" stroke-width="5"/>
<path d="M1205 547V620M1205 620L1179 557M1168 567V600M1168 600L1156 567" stroke-width="3"/>
<path d="M1205 620L1132 583" stroke-width="5"/>
<path d="M662 263L811 340M1267 289L1089 349M600 517L781 456M1059 468L1207 545" stroke-width="4"/>
</g>
<use href="#post" x="671" y="258"/><use href="#post" x="818" y="335"/><use href="#post" x="1277" y="293"/><use href="#post" x="1095" y="357"/><use href="#post" x="607" y="525"/><use href="#post" x="788" y="462"/><use href="#post" x="1069" y="465"/><use href="#post" x="1214" y="542"/>
<use href="#sup" x="328" y="393"/><use href="#sup" x="464" y="537"/><use href="#sup" x="735" y="678"/><use href="#sup" x="871" y="671"/><use href="#sup" x="1037" y="692"/><use href="#sup" x="601" y="607"/><use href="#sup" x="1205" y="635"/><use href="#sup" x="1372" y="572"/>
<path d="M987 158L995 152L1003 158" stroke="#33cc33" stroke-width="2.500" fill="none"/>

<!-- hub axes -->
<path d="M933 478V448" stroke="#0000d0" stroke-width="1.600"/><path d="M933 442L930 452H936Z" fill="#0000d0"/>
<path d="M933 478L910 468" stroke="#e01010" stroke-width="1.600"/><path d="M907 466L914 466L911 472Z" fill="#e01010"/>
<path d="M933 478L908 489" stroke="#10c020" stroke-width="1.600"/><path d="M904 490L911 485L913 491Z" fill="#10a020"/>
<text x="930" y="438" font-size="10" fill="#0000d0">Z</text><text x="898" y="466" font-size="10" fill="#e01010">X</text><text x="891" y="497" font-size="10" fill="#10c020">Y</text>
<!-- corner axes -->
<path d="M325 712V672" stroke="#0000d0" stroke-width="2"/><path d="M325 668L322 676H328Z" fill="#0000d0"/>
<path d="M325 712L305 703" stroke="#e01010" stroke-width="2"/>
<path d="M325 712L298 722" stroke="#10c020" stroke-width="2"/><path d="M294 724L301 718L303 724Z" fill="#10a020"/>
<text x="322" y="672" font-size="10" fill="#0000d0">Z</text><text x="291" y="701" font-size="10" fill="#e01010">X</text><text x="284" y="729" font-size="10" fill="#10c020">Y</text>

<text x="278" y="116" font-size="11" fill="#111">Konturlinien [mm]</text>
<text x="275" y="130" font-size="11" letter-spacing="-.55" fill="#111">RF-FORMFINDUNG</text>
<text x="275" y="817" font-size="11" letter-spacing="-.12" fill="#111">Max Konturlinien: 2500.0, Min Konturlinien: -1048.4 mm</text>
</g>

<!-- Panel -->
<rect x="1435.500" y="255.500" width="164" height="512" fill="#f0f0f2" stroke="#c8cad0"/>
<path d="M1599 256V767M1436 767H1599" stroke="#808488"/>
<rect x="1438" y="259" width="158" height="24" fill="#b9c0cb"/>
<text x="1441" y="275" font-size="12" font-weight="bold" fill="#50555e" letter-spacing="-.2">Panel</text>
<path d="M1585 266L1592 273M1592 266L1585 273" stroke="#808690" stroke-width="1.500"/>
<rect x="1438" y="283" width="157" height="456" fill="#f0f0f0"/>
<path d="M1438 283V762M1595.500 283V762" stroke="#8a8e94"/>
<text x="1444" y="299" font-size="11.500" fill="#111">Form</text>
<text x="1445" y="315" font-size="11.500" letter-spacing="-.35" fill="#111">Konturlinien [mm]</text>
<rect x="1444" y="320" width="146" height="212" fill="#f8f6f0"/><path d="M1444.500 532V320.500H1590" stroke="#909090" fill="none"/>
<g stroke="#000" stroke-width="1">
<rect x="1480.500" y="331.500" width="26" height="16.800" fill="#bb0000"/><rect x="1480.500" y="348.300" width="26" height="16.800" fill="#ff0000"/><rect x="1480.500" y="365.100" width="26" height="16.800" fill="#ffaa00"/><rect x="1480.500" y="381.900" width="26" height="16.800" fill="#d0cc00"/><rect x="1480.500" y="398.700" width="26" height="16.800" fill="#ffff00"/><rect x="1480.500" y="415.500" width="26" height="16.800" fill="#00ff00"/><rect x="1480.500" y="432.300" width="26" height="16.800" fill="#00e080"/><rect x="1480.500" y="449.100" width="26" height="16.800" fill="#00ffff"/><rect x="1480.500" y="465.900" width="26" height="16.800" fill="#0099ff"/><rect x="1480.500" y="482.700" width="26" height="16.800" fill="#0000ff"/><rect x="1480.500" y="499.500" width="26" height="16.800" fill="#000099"/>
<path d="M1507 331.500H1513M1507 348.300H1513M1507 365.100H1513M1507 381.900H1513M1507 398.700H1513M1507 415.500H1513M1507 432.300H1513M1507 449.100H1513M1507 465.900H1513M1507 482.700H1513M1507 499.500H1513M1507 516.300H1513"/>
</g>
<g font-size="12" letter-spacing="-.55" text-anchor="end" fill="#111">
<text x="1554" y="335">2500.0</text><text x="1554" y="352">2177.4</text><text x="1554" y="368.500">1854.8</text><text x="1554" y="385">1532.2</text><text x="1554" y="402">1209.7</text><text x="1554" y="419">887.1</text><text x="1554" y="435.500">564.5</text><text x="1554" y="452.500">241.9</text><text x="1554" y="469">-80.7</text><text x="1554" y="486">-403.3</text><text x="1554" y="502.500">-725.9</text><text x="1554" y="519.500">-1048.4</text>
</g>
<rect x="1444.500" y="542.500" width="145" height="33" fill="#eff2f9" stroke="#a8b0e0"/>
<g font-size="12" letter-spacing="-.3" fill="#111"><text x="1480" y="555">Max</text><text x="1503" y="555">:</text><text x="1555" y="555" text-anchor="end">2500.0</text><text x="1480" y="572">Min</text><text x="1503" y="572">:</text><text x="1556" y="572" text-anchor="end">-1048.4</text></g>
<rect x="1567.500" y="712.500" width="24" height="20" fill="#e0e0e0" stroke="#a0a0a0"/><path d="M1571 716H1582M1571 718.500H1582M1571 721H1577" stroke="#666"/><circle cx="1580" cy="724" r="3.500" fill="#c8dcf0" stroke="#335a90" stroke-width="1.400"/><path d="M1583 727L1587 731" stroke="#335a90" stroke-width="2"/>
<rect x="1438" y="739" width="157" height="24" fill="#cfd3db"/><path d="M1438 739H1595" stroke="#777"/>
<rect x="1442" y="740" width="24" height="22" rx="2" fill="#f2f5fa" stroke="#c0c8d4"/>
<g><rect x="1446" y="743" width="7" height="3" fill="#e01818"/><rect x="1446" y="746" width="7" height="3" fill="#ffaa00"/><rect x="1446" y="749" width="7" height="3" fill="#10d030"/><rect x="1446" y="752" width="7" height="3" fill="#00c8e0"/><rect x="1446" y="755" width="7" height="3" fill="#1030e0"/><path d="M1456 744h4v3h-4zM1456 749h4v3h-4zM1456 754h4v3h-4z" fill="none" stroke="#667"/></g>
<path d="M1481 745V757M1475 757H1487M1474 746H1488" stroke="#7a6020" stroke-width="1.400"/><path d="M1474 746L1472 752H1477ZM1488 746L1486 752H1491Z" fill="#e8d080" stroke="#7a6020" stroke-width=".8"/>
<path d="M1506 759H1520M1518 744L1512 754M1510 758V754H1514" stroke="#333" stroke-width="2" fill="none"/><rect x="1510" y="750" width="4" height="4" fill="#eee" stroke="#333"/>

<!-- table panel -->
<rect x="270" y="827" width="1410" height="203" fill="#f0f0f0"/>
<rect x="270" y="831" width="1410" height="20" fill="#b9c0cb"/>
<text x="273" y="845" font-size="11.500" fill="#3a3e48">1.1 Knoten</text>
<path d="M1651 837V844M1655 837V844M1650 844H1656M1653 844V848M1649 837H1657M1668 837L1676 845M1676 837L1668 845" stroke="#808690" fill="none"/>
<rect x="270" y="851" width="1410" height="25" fill="url(#tbg)"/>
<rect x="270" y="876" width="1410" height="1" fill="#555"/>
<g>
<use href="#on" x="289" y="864"/><use href="#b1" x="289" y="864"/><use href="#b2" x="310" y="864"/><use href="#b3" x="332" y="864"/><use href="#b4" x="354" y="864"/><use href="#b5" x="377" y="864"/><use href="#sep" x="392" y="864"/><use href="#b6" x="407" y="864"/><use href="#b7" x="429" y="864"/><use href="#sep" x="444" y="864"/><use href="#on" x="459" y="864"/><use href="#b8" x="459" y="864"/><use href="#on" x="481" y="864"/><use href="#b9" x="481" y="864"/><use href="#b10" x="503" y="864"/><use href="#sep" x="518" y="864"/><use href="#b11" x="533" y="864"/><use href="#b12" x="555" y="864"/><use href="#b13" x="577" y="864"/><use href="#sep" x="592" y="864"/><use href="#b14" x="606" y="864"/><use href="#sep" x="621" y="864"/><use href="#b15" x="638" y="864"/><use href="#b16" x="658" y="864"/><use href="#b17" x="682" y="864"/><use href="#sep" x="696" y="864"/><use href="#b18" x="711" y="864"/><use href="#b19" x="732" y="864"/><use href="#sep" x="748" y="864"/><use href="#b20" x="763" y="864"/><use href="#sep" x="778" y="864"/><use href="#b21" x="793" y="864"/><use href="#gls" x="814" y="864"/><use href="#b22" x="836" y="864"/><use href="#b23" x="859" y="864"/><use href="#sep" x="874" y="864"/><use href="#b24" x="889" y="864"/><use href="#b25" x="911" y="864"/><use href="#b26" x="933" y="864"/><use href="#sep" x="948" y="864"/><use href="#b27" x="964" y="864"/>
</g>

<!-- table -->
<rect x="272" y="879" width="1388" height="96" fill="#f0f0f0"/>
<rect x="272" y="880" width="46" height="47" fill="#ececec"/>
<g fill="#e2e2e2"><rect x="318" y="880" width="83" height="13" fill="#3399ff"/><rect x="401" y="880" width="72" height="13"/><rect x="473" y="880" width="91" height="13"/><rect x="564" y="880" width="78" height="13"/><rect x="642" y="880" width="78" height="13"/><rect x="720" y="880" width="78" height="13"/><rect x="798" y="880" width="860" height="13"/></g>
<rect x="318" y="927" width="1340" height="47" fill="#fff"/>
<rect x="720" y="959" width="938" height="15" fill="#ebebeb"/>
<rect x="273" y="927" width="44" height="15" fill="#3399ff"/><rect x="273" y="943" width="44" height="15" fill="#e4e4e4"/><rect x="273" y="959" width="44" height="15" fill="#e4e4e4"/>
<g stroke="#999" fill="none">
<path d="M272 879.500H1658M272 893.500H1658M272 926.500H1658M272 942.500H1658M272 958.500H1658M272 974.500H1658"/>
<path d="M317.500 880V974M400.500 880V974M472.500 880V974M563.500 880V974M641.500 880V893M641.500 909V974M719.500 880V893M719.500 909V974M797.500 880V974M1657.500 880V974"/>
</g>
<path d="M318 892.500H1657" stroke="#777"/>
<rect x="318.500" y="927.500" width="82" height="14" fill="none" stroke="#111" stroke-dasharray="1 1"/>
<g class="tb">
<text x="360" y="891" class="c" fill="#fff">A</text><text x="437" y="891" class="c">B</text><text x="518" y="891" class="c">C</text><text x="603" y="891" class="c">D</text><text x="681" y="891" class="c">E</text><text x="759" y="891" class="c">F</text><text x="1228" y="891" class="c">G</text>
<text x="295" y="905" class="c">Knoten</text><text x="295" y="918" class="c">Nr.</text>
<text x="359" y="921" class="c">Knotentyp</text>
<text x="437" y="905" class="c">Bezugs-</text><text x="437" y="921" class="c">knoten</text>
<text x="518" y="905" class="c">Koordinaten-</text><text x="518" y="921" class="c">system</text>
<text x="679" y="905" class="c">Knotenkoordinaten</text>
<text x="601" y="921" class="c">X [m]</text><text x="679" y="921" class="c">Y [m]</text><text x="758" y="921" class="c">Z [m]</text>
<text x="1228" y="921" class="c">Kommentar</text>
<text x="295" y="939" class="c" fill="#fff">1</text><text x="295" y="955" class="c">2</text><text x="295" y="971" class="c">3</text>
<text x="322" y="939">Standard</text><text x="322" y="955">Standard</text><text x="322" y="971">Standard</text>
<text x="437" y="939" class="c">0</text><text x="437" y="955" class="c">0</text><text x="437" y="971" class="c">0</text>
<text x="478" y="939">Kartesisch</text><text x="478" y="955">Kartesisch</text><text x="478" y="971">Kartesisch</text>
<text x="637" y="939" class="r">6.000</text><text x="637" y="955" class="r">13.000</text><text x="637" y="971" class="r">6.000</text>
<text x="715" y="939" class="r">0.000</text><text x="715" y="955" class="r">0.000</text><text x="715" y="971" class="r">0.000</text>
<text x="793" y="939" class="r">0.000</text><text x="793" y="955" class="r">0.000</text>
</g>
<path d="M478 941H485M478 957H485M478 973H485" stroke="#111"/>
<rect x="1660" y="880" width="16" height="95" fill="#f0f0f0"/><rect x="1660" y="896" width="16" height="17" fill="#c9c9c9"/>
<path d="M1665 889L1668 886L1671 889M1665 965L1668 968L1671 965" stroke="#555" stroke-width="1.400" fill="none"/>

<!-- tabs -->
<rect x="270" y="992" width="1410" height="1" fill="#666"/>
<path d="M270 1009.500H1616" stroke="#777"/>
<rect x="270" y="993" width="42" height="16" fill="#fafafa"/>
<path d="M269 993L272 1008Q272 1010 275 1010H308Q312 1010 312 1007V993" fill="#f8f8f8" stroke="#555"/>
<path d="M352 994V1007Q352 1009 350 1009M413 994V1007Q413 1009 411 1009M460.500 994V1007Q460 1009 458 1009M542 994V1007Q542 1009 540 1009M602 994V1007Q602 1009 600 1009M669 994V1007Q669 1009 667 1009M729 994V1007Q729 1009 727 1009M801 994V1007Q801 1009 799 1009M876 994V1007Q876 1009 874 1009M1057.500 994V1007Q1057 1009 1055 1009M1128 994V1007Q1128 1009 1126 1009M1215 994V1007Q1215 1009 1213 1009M1315 994V1007Q1315 1009 1313 1009M1390 994V1007Q1390 1009 1388 1009M1427 994V1007Q1427 1009 1425 1009M1508 994V1007Q1508 1009 1506 1009" stroke="#777" fill="none"/>
<g class="tc">
<text x="274" y="1006">Knoten</text><text x="318" y="1006">Linien</text><text x="355" y="1006">Materialien</text><text x="417" y="1006">Flächen</text><text x="464" y="1006">Volumenkörper</text><text x="545" y="1006">Öffnungen</text><text x="606" y="1006">Knotenlager</text><text x="672" y="1006">Linienlager</text><text x="733" y="1006">Flächenlager</text><text x="805" y="1006">Liniengelenke</text><text x="880" y="1006">Orthotrope Flächen und Membranen</text><text x="1061" y="1006">Querschnitte</text><text x="1132" y="1006">Stabendgelenke</text><text x="1219" y="1006">Stabexzentrizitäten</text><text x="1319" y="1006">Stabteilungen</text><text x="1394" y="1006">Stäbe</text><text x="1432" y="1006">Stabbettungen</text>
</g>
<g><rect x="1617" y="994" width="14" height="14" fill="#eee" stroke="#bbb"/><rect x="1634" y="994" width="14" height="14" fill="#eee" stroke="#bbb"/><rect x="1650" y="994" width="14" height="14" fill="#eee" stroke="#888"/><rect x="1666" y="994" width="13" height="14" fill="#eee" stroke="#888"/><path d="M1620 997V1005M1627 997V1005L1622 1001ZM1643 997V1005L1638 1001Z" fill="#aaa" stroke="#aaa"/><path d="M1654 997V1005L1660 1001ZM1669 997V1005L1675 1001Z" fill="#111"/><path d="M1676.500 997V1005" stroke="#111"/></g>

<!-- status bar -->
<rect y="1030" width="1680" height="20" fill="url(#stb)"/>
<rect x="0" y="1029" width="1680" height="1" fill="#9a9ea6"/>
<path d="M1372.500 1031V1050M1460.500 1031V1050M1534.500 1031V1050" stroke="#9a9ea6"/>
<g stroke="#222" fill="#d4d6dc"><rect x="952.500" y="1031.500" width="34" height="19"/><rect x="1039.500" y="1031.500" width="49" height="19"/><rect x="1090.500" y="1031.500" width="46" height="19"/><rect x="1138.500" y="1031.500" width="49" height="19"/><rect x="1189.500" y="1031.500" width="28" height="19"/></g>
<rect x="991.500" y="1031.500" width="45" height="19" fill="#d8dae0" stroke="#f4f4f6"/>
<g font-size="11.500" letter-spacing="-.3" fill="#222"><text x="955" y="1045">FANG</text><text x="992" y="1043">RASTER</text><text x="1044" y="1045">KARTES</text><text x="1092" y="1045">OFANG</text><text x="1141" y="1045">HLINIEN</text><text x="1192" y="1045">DXF</text></g>
<rect x="1600.500" y="1032.500" width="75" height="17" fill="#eceef2" stroke="#909498"/>
<text x="1605" y="1045" font-size="11.500" fill="#666" letter-spacing=".1">Z-Koordinate</text>
</svg>
</body></html>
